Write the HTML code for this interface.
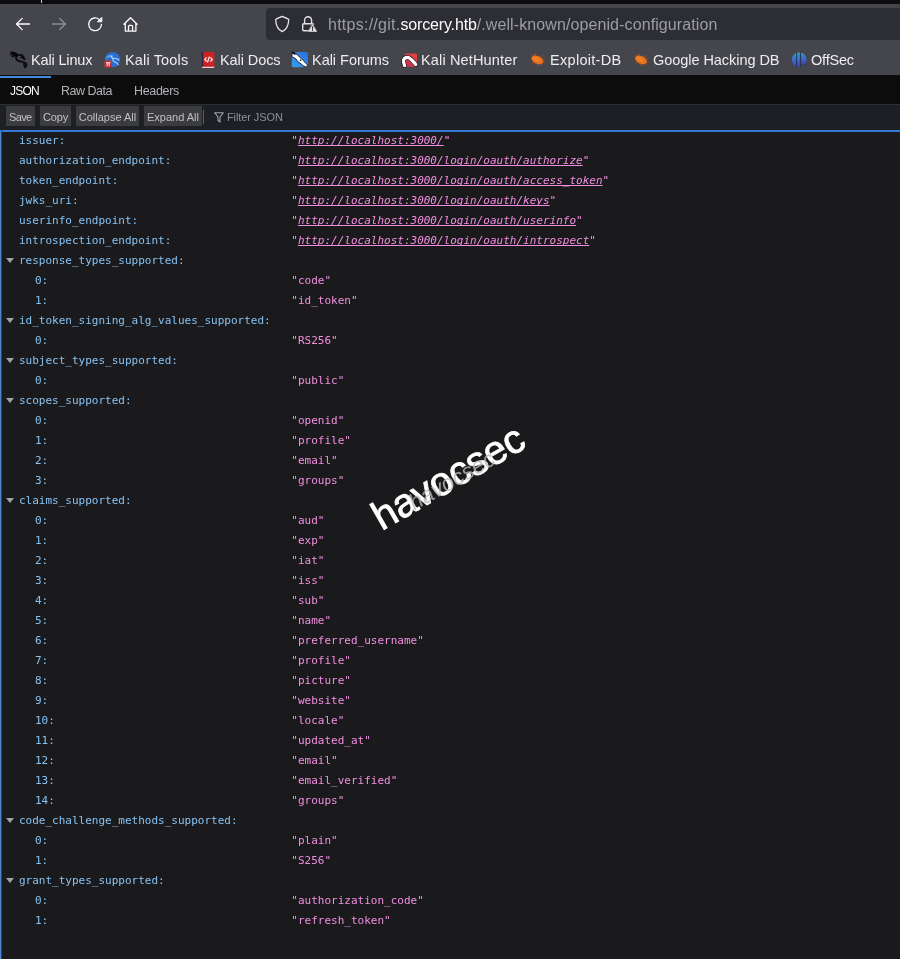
<!DOCTYPE html>
<html lang="en">
<head>
<meta charset="utf-8">
<title>openid-configuration</title>
<style>
*{box-sizing:border-box;margin:0;padding:0}
html,body{width:900px;height:959px;overflow:hidden;background:#1a1a1c}
body{position:relative;font-family:"Liberation Sans",sans-serif;color:#fbfbfe}
#top{position:absolute;left:0;top:0;width:900px;height:4px;background:#0c0c11}
#tick{position:absolute;left:41px;top:0;width:1px;height:3px;background:#d0d0d4}
#nav{position:absolute;left:0;top:4px;width:900px;height:72px;background:#45464c}
#url{position:absolute;left:266px;top:8px;width:640px;height:32px;border-radius:4px;background:#2d2e33}
#urltxt{position:absolute;left:328px;top:15px;font-size:16px;line-height:20px;color:#9d9da4;white-space:nowrap}
#urltxt b{font-weight:normal;color:#fbfbfe}
.bm{position:absolute;top:50px;font-size:14.5px;line-height:20px;color:#ededf1;white-space:nowrap}
svg{position:absolute;overflow:visible}
.bm,.tab,.btn,#filt,#urltxt{will-change:transform}
#tabs{position:absolute;left:0;top:75px;width:900px;height:29px;background:#0c0c0d}
#tabhl{position:absolute;left:0;top:76px;width:51px;height:2px;background:#4688dc}
.tab{position:absolute;top:82px;font-size:12.5px;line-height:18px;color:#b4b4b9;white-space:nowrap}
#tbar{position:absolute;left:0;top:104px;width:900px;height:26px;background:#1c1f23;border-top:1px solid #2c2e33}
.btn{position:absolute;top:106px;height:20px;background:#3b3b40;color:#c0c0c5;font-size:11px;line-height:22px;text-align:center;white-space:nowrap}
#sep{position:absolute;left:203px;top:110px;width:1px;height:14px;background:#5c5c62}
#filt{position:absolute;left:227.3px;top:106px;font-size:11px;line-height:22px;letter-spacing:-.1px;color:#8f8f96;white-space:nowrap}
#panel{position:absolute;left:0;top:130px;width:904px;height:840px;border:2px solid #3679d4;border-left:0;background:#1a1a1c}
#pl{position:absolute;left:0;top:130px;width:1px;height:840px;background:#4a86d4;box-shadow:1px 0 0 #24457a}
#rowsc{position:absolute;left:0;top:131px;will-change:transform;width:900px;font-family:"DejaVu Sans Mono","Liberation Mono",monospace;font-size:11px;line-height:20px}
.r{position:relative;height:20px;white-space:nowrap}
.k{position:absolute;left:19px;top:0;color:#86c2f4}
.n .k{left:35px}
.v{position:absolute;left:291.3px;top:0;color:#f28ee2}
.v a{font-style:italic;text-decoration:underline;text-decoration-skip-ink:none;color:#f28ee2}
.tw{position:absolute;left:6px;top:7.3px;width:0;height:0;border-left:4px solid transparent;border-right:4px solid transparent;border-top:5px solid #a2a2a7}
#wm1{position:absolute;left:364px;top:455px;-webkit-text-stroke:.8px #fff;width:160px;height:48px;font-size:40px;line-height:48px;color:#fff;transform:rotate(-30deg);transform-origin:50% 50%;white-space:nowrap;text-align:center}
#wm2{position:absolute;left:397px;top:468px;width:110px;height:26px;font-size:22.5px;line-height:26px;color:rgba(185,185,188,.8);transform:rotate(-30deg);transform-origin:50% 50%;white-space:nowrap;text-align:center;font-style:italic}
</style>
</head>
<body>
<div id="top"></div><div id="tick"></div>
<div id="nav"></div>
<div id="url"></div>
<div id="urltxt"><span style="letter-spacing:.25px">https://git.</span><b style="letter-spacing:-.15px">sorcery.htb</b><span style="letter-spacing:.1px">/.well-known/openid-configuration</span></div>

<span class="bm" style="left:31px;letter-spacing:-.15px">Kali Linux</span>
<span class="bm" style="left:124.600px;letter-spacing:.15px">Kali Tools</span>
<span class="bm" style="left:219.600px;letter-spacing:-.08px">Kali Docs</span>
<span class="bm" style="left:312px;letter-spacing:-.03px">Kali Forums</span>
<span class="bm" style="left:421.400px;letter-spacing:.15px">Kali NetHunter</span>
<span class="bm" style="left:550px;letter-spacing:.3px">Exploit-DB</span>
<span class="bm" style="left:653.200px;letter-spacing:-.05px">Google Hacking DB</span>
<span class="bm" style="left:811.300px;letter-spacing:-.2px">OffSec</span>


<!-- nav icons -->
<svg style="left:0;top:0" width="900" height="80" viewBox="0 0 900 80" fill="none" stroke-linecap="round" stroke-linejoin="round">
 <g stroke="#fbfbfe" stroke-width="1.3">
  <path d="M29.5 24H16.6M22.2 18.4L16.5 24l5.700 5.600"/>
  <path d="M101.500 24.300a6.400 6.400 0 1 1-2.200-4.850" />
  <path d="M101.900 17.500v4.300h-4.300z" fill="#fbfbfe" stroke-width="0.800"/>
  <path d="M123.900 24.200L130.500 17.700l6.600 6.500M125.300 23.200v7.900h10.600v-7.900M128.500 31v-4.400a1.200 1.200 0 0 1 1.200-1.200h1.700a1.200 1.200 0 0 1 1.200 1.200V31"/>
 </g>
 <g stroke="#8c8c93" stroke-width="1.4">
  <path d="M52.5 24H65.400M59.800 18.400L65.500 24l-5.700 5.600"/>
 </g>
 <!-- shield -->
 <path d="M282.200 16.400L288 18.900Q288.800 19.300 288.700 20.200C288.400 26 286.400 29.500 282.200 31.700C278 29.500 276 26 275.700 20.200Q275.600 19.300 276.400 18.900Z" stroke="#e8e8ec" stroke-width="1.300"/>
 <!-- lock -->
 <path d="M304.600 23.500v-3.200a3.500 3.500 0 0 1 7 0v3.200" stroke="#e0e0e4" stroke-width="1.400"/>
 <path d="M309 30.700h-5.300a1 1 0 0 1-1-1v-5a1 1 0 0 1 1-1h8.800a1 1 0 0 1 1 .8" stroke="#e0e0e4" stroke-width="1.400"/>
 <path d="M312.600 23.400l5.300 8.700h-10.600z" fill="#2c2d32"/><path d="M312.600 24.700l4.100 6.700h-8.200z" fill="#e4e4e8" stroke="#e4e4e8" stroke-width="0.700"/>
 <path d="M312.600 26.900v2.200M312.600 30.300v.2" stroke="#2c2d32" stroke-width="1.100"/>
</svg>
<!-- bookmark icons -->
<svg style="left:0;top:44px" width="900" height="32" viewBox="0 44 900 32" fill="none">
 <!-- kali dragon -->
 <g stroke="#08080c" stroke-width="1.700" stroke-linecap="round" stroke-linejoin="round">
  <path d="M10.900 52.300c2.500 0 5 .7 6.600 2.500M11 54.400c2.400-.100 4.500 .2 6.400 .9M12.200 56.500c1.800-.600 3.600-.900 5.300-1"/>
  <path d="M17.500 55c-1.500 1.300-1.900 2.600-1.200 4 .8 1.600 2.500 2.300 5 2.600 2.400 .3 4.200 1 5.400 2.800M23.800 62.800c.1 1.700 .5 3.200 1.300 4.700M26.700 64.400c-.3 1.200-.8 2.100-1.400 2.900"/>
  <path d="M17.500 55c1.500 0 2.800-.1 4.200 0 1.400 1.200 2.400 2.500 3 4.200-1.200-.9-2.400-1.500-3.700-2"/>
 </g>
 <!-- kali tools -->
 <circle cx="112.600" cy="59.600" r="7.600" fill="#2a6ed0"/>
 <path d="M105.600 58.200c1.600-2.600 4.200-3.700 7-3.300l1 2.300c-2.900-.4-5.400 .2-8 1.800z" fill="#6fb0f0" opacity=".75"/>
 <path d="M111.200 56.500c1.600 1.500 2.100 3.100 2.100 4.600 1.600 1 3.500 1.500 5 3.600M113.300 58.500c2.100-.5 4.100 0 5.600 1.500" stroke="#b4d8ff" stroke-width="1.100" stroke-linecap="round"/>
 <rect x="104.200" y="60.300" width="7.800" height="7.500" rx="2.600" fill="#bc3238"/>
 <path d="M106 62.700h4.400M107.200 62.700v3.600M109.200 62.700v3.600" stroke="#ffe4e4" stroke-width="1"/>
 <!-- kali docs -->
 <rect x="201.700" y="52" width="2" height="15" fill="#36244c"/>
 <rect x="203.400" y="52" width="11" height="14.800" fill="#cc2222"/>
 <rect x="202" y="66.700" width="12.200" height="1.300" fill="#f2c4d2"/>
 <path d="M206.300 57.800l-1.600 1.700 1.600 1.700M210.700 57.800l1.600 1.700-1.600 1.700M209.300 57l-1.700 5" stroke="#ffe6e6" stroke-width="1.250" stroke-linecap="round" stroke-linejoin="round"/>
 <!-- kali forums -->
 <defs><linearGradient id="gf" x1="0" y1="1" x2="1" y2="0"><stop offset="0" stop-color="#38a0ea"/><stop offset="1" stop-color="#2a6ee0"/></linearGradient>
 <linearGradient id="gn" x1="1" y1="0" x2="0" y2="1"><stop offset="0" stop-color="#e8443c"/><stop offset="1" stop-color="#b82c58"/></linearGradient>
 <linearGradient id="go" x1="0" y1="0" x2="0" y2="1"><stop offset="0" stop-color="#36a4b4"/><stop offset=".5" stop-color="#3e68c8"/><stop offset="1" stop-color="#54389c"/></linearGradient></defs>
 <rect x="291.800" y="52" width="16.200" height="15.300" rx="1.500" fill="url(#gf)"/>
 <path d="M291.300 51.500h7.200l-7.200 2.300z" fill="#45464d"/>
 <path d="M292 53.700L294.800 53l2.800 2.100 3.500 3.300 2.300 2.300 4.100 4.300-1 2.200-3.500-1.600-3-2.600-2.500-1.700-1.700-2.500-3.800-2.100z" fill="#fff" stroke="#0c1830" stroke-width="0.900" stroke-linejoin="round"/>
 <path d="M292.300 52.100l2.500 2" stroke="#101018" stroke-width="1.500" stroke-linecap="round"/>
 <circle cx="300.500" cy="60.300" r=".8" fill="#111"/>
 <!-- nethunter -->
 <path d="M405 53.500h10.500a1.500 1.500 0 0 1 1.500 1.500v10.500a1.500 1.500 0 0 1-1.500 1.500h-12a1.500 1.500 0 0 1-1.500-1.500z" fill="url(#gn)"/>
 <path d="M404.600 65.600C402.400 61 403.400 57.500 407.200 57.300C410.400 57.200 412.400 60.500 415.700 64.500" stroke="#1c0c16" stroke-width="4.600" stroke-linecap="round"/>
 <path d="M404.600 65.600C402.400 61 403.400 57.500 407.200 57.300C410.400 57.200 412.400 60.500 415.700 64.500" stroke="#fff" stroke-width="3.300" stroke-linecap="round"/>
 <!-- exploit-db bugs -->
 <g>
  <path d="M533 56.200l-1.300-1.500M535.500 55.300l-.3-1.800M540.500 57l1.700-1.300M542.500 59.300l1.800-.6M543.200 62l1.600.5M541 64l.8 1.300M537.500 64.300l.2 1.300M533.500 62.500l-1.200 1.200" stroke="#a85420" stroke-width="0.900" stroke-linecap="round"/>
  <ellipse cx="537.300" cy="59.900" rx="6.300" ry="3.900" transform="rotate(24 537.300 59.900)" fill="#e8701c"/>
  <ellipse cx="536.300" cy="59.300" rx="3.500" ry="2" transform="rotate(24 536.300 59.300)" fill="#f08028"/>
 </g>
 <g transform="translate(103.600 0)">
  <path d="M533 56.200l-1.300-1.500M535.500 55.300l-.3-1.800M540.500 57l1.700-1.300M542.500 59.300l1.800-.6M543.200 62l1.600.5M541 64l.8 1.300M537.500 64.300l.2 1.300M533.500 62.500l-1.200 1.200" stroke="#a85420" stroke-width="0.900" stroke-linecap="round"/>
  <ellipse cx="537.300" cy="59.900" rx="6.300" ry="3.900" transform="rotate(24 537.300 59.900)" fill="#e8701c"/>
  <ellipse cx="536.300" cy="59.300" rx="3.500" ry="2" transform="rotate(24 536.300 59.300)" fill="#f08028"/>
 </g>
 <!-- offsec -->
 <clipPath id="co"><circle cx="799.200" cy="59.800" r="7.500"/></clipPath>
 <g clip-path="url(#co)" fill="url(#go)">
  <rect x="791" y="52" width="17" height="16" fill="#1d3559"/>
  <rect x="791" y="52" width="5.100" height="16"/>
  <rect x="797.100" y="52" width="2.800" height="16"/>
  <rect x="801" y="52" width="6.500" height="12.600"/>
  <rect x="801" y="64.600" width="6.500" height="4" fill="#45464d"/>
 </g>
</svg>
<div id="tabs"></div><div id="tabhl"></div>
<span class="tab" style="left:10px;color:#fbfbfe;font-size:12px;letter-spacing:-.8px">JSON</span>
<span class="tab" style="left:60.5px;letter-spacing:-.5px">Raw Data</span>
<span class="tab" style="left:133.5px;letter-spacing:-.33px">Headers</span>

<div id="tbar"></div>
<div class="btn" style="left:6px;width:29px;letter-spacing:-.7px;text-indent:-.5px">Save</div>
<div class="btn" style="left:40px;width:31px;letter-spacing:-.2px">Copy</div>
<div class="btn" style="left:76px;width:63px">Collapse All</div>
<div class="btn" style="left:144px;width:58px">Expand All</div>
<div id="sep"></div>
<div id="filt">Filter JSON</div>
<!-- filter icon -->
<svg style="left:214px;top:112px" width="10" height="11" viewBox="0 0 10 11" fill="none" stroke="#a4a4aa" stroke-width="1.100" stroke-linejoin="round"><path d="M.7.700h8.600L6 5v5L4 8.500V5z"/></svg>


<div id="panel"></div><div id="pl"></div>
<div id="rowsc">
<div class="r"><span class="k">issuer:</span><span class="v">"<a>http://localhost:3000/</a>"</span></div>
<div class="r"><span class="k">authorization_endpoint:</span><span class="v">"<a>http://localhost:3000/login/oauth/authorize</a>"</span></div>
<div class="r"><span class="k">token_endpoint:</span><span class="v">"<a>http://localhost:3000/login/oauth/access_token</a>"</span></div>
<div class="r"><span class="k">jwks_uri:</span><span class="v">"<a>http://localhost:3000/login/oauth/keys</a>"</span></div>
<div class="r"><span class="k">userinfo_endpoint:</span><span class="v">"<a>http://localhost:3000/login/oauth/userinfo</a>"</span></div>
<div class="r"><span class="k">introspection_endpoint:</span><span class="v">"<a>http://localhost:3000/login/oauth/introspect</a>"</span></div>
<div class="r"><i class="tw"></i><span class="k">response_types_supported:</span></div>
<div class="r n"><span class="k">0:</span><span class="v">"code"</span></div>
<div class="r n"><span class="k">1:</span><span class="v">"id_token"</span></div>
<div class="r"><i class="tw"></i><span class="k">id_token_signing_alg_values_supported:</span></div>
<div class="r n"><span class="k">0:</span><span class="v">"RS256"</span></div>
<div class="r"><i class="tw"></i><span class="k">subject_types_supported:</span></div>
<div class="r n"><span class="k">0:</span><span class="v">"public"</span></div>
<div class="r"><i class="tw"></i><span class="k">scopes_supported:</span></div>
<div class="r n"><span class="k">0:</span><span class="v">"openid"</span></div>
<div class="r n"><span class="k">1:</span><span class="v">"profile"</span></div>
<div class="r n"><span class="k">2:</span><span class="v">"email"</span></div>
<div class="r n"><span class="k">3:</span><span class="v">"groups"</span></div>
<div class="r"><i class="tw"></i><span class="k">claims_supported:</span></div>
<div class="r n"><span class="k">0:</span><span class="v">"aud"</span></div>
<div class="r n"><span class="k">1:</span><span class="v">"exp"</span></div>
<div class="r n"><span class="k">2:</span><span class="v">"iat"</span></div>
<div class="r n"><span class="k">3:</span><span class="v">"iss"</span></div>
<div class="r n"><span class="k">4:</span><span class="v">"sub"</span></div>
<div class="r n"><span class="k">5:</span><span class="v">"name"</span></div>
<div class="r n"><span class="k">6:</span><span class="v">"preferred_username"</span></div>
<div class="r n"><span class="k">7:</span><span class="v">"profile"</span></div>
<div class="r n"><span class="k">8:</span><span class="v">"picture"</span></div>
<div class="r n"><span class="k">9:</span><span class="v">"website"</span></div>
<div class="r n"><span class="k">10:</span><span class="v">"locale"</span></div>
<div class="r n"><span class="k">11:</span><span class="v">"updated_at"</span></div>
<div class="r n"><span class="k">12:</span><span class="v">"email"</span></div>
<div class="r n"><span class="k">13:</span><span class="v">"email_verified"</span></div>
<div class="r n"><span class="k">14:</span><span class="v">"groups"</span></div>
<div class="r"><i class="tw"></i><span class="k">code_challenge_methods_supported:</span></div>
<div class="r n"><span class="k">0:</span><span class="v">"plain"</span></div>
<div class="r n"><span class="k">1:</span><span class="v">"S256"</span></div>
<div class="r"><i class="tw"></i><span class="k">grant_types_supported:</span></div>
<div class="r n"><span class="k">0:</span><span class="v">"authorization_code"</span></div>
<div class="r n"><span class="k">1:</span><span class="v">"refresh_token"</span></div>
</div>
<div id="wm1">havocsec</div>
<div id="wm2">havocsec</div>
</body>
</html>
